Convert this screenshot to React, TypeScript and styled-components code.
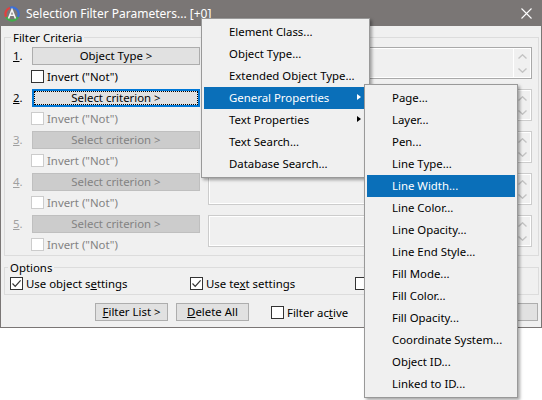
import React from 'react';
import styled, { createGlobalStyle, css } from 'styled-components';

const FONT = `"Segoe UI", "Noto Sans", "Open Sans", sans-serif`;
const SIZE = '11.4px';

const Global = createGlobalStyle`
  html, body { margin: 0; padding: 0; background: #ffffff; }
  body { font-family: ${FONT}; font-size: ${SIZE}; color: #000; }
  * { box-sizing: border-box; }
`;

const Screen = styled.div`
  position: relative;
  width: 542px;
  height: 400px;
  overflow: hidden;
`;

const Window = styled.div`
  width: 542px;
  border: 1px solid #7a7675;
  background: #f0f0f0;
`;

const TitleBar = styled.div`
  height: 25px;
  background: #7a7675;
  display: flex;
  align-items: center;
  padding-left: 3px;
  color: #fff;
`;

const TitleText = styled.span`
  margin-left: 6px;
  font-size: 12px;
  line-height: 16px;
  white-space: nowrap;
`;

const CloseGlyph = styled.svg`
  margin-left: auto;
  margin-right: 9px;
`;

const Client = styled.div`
  padding: 4px 2px 6px 3px;
`;

const Group = styled.fieldset<{ $pad: string }>`
  margin: 0;
  min-width: 0;
  border: 1px solid #dcdcdc;
  padding: ${p => p.$pad};
  & + & {
    margin-top: 4px;
  }
`;

const Legend = styled.legend`
  padding: 0 2px;
  margin-left: -2px;
  line-height: 15px;
  font-size: ${SIZE};
`;

const Rows = styled.div`
  display: flex;
  flex-direction: column;
  gap: 6px;
`;

const CriteriaRow = styled.div`
  display: grid;
  grid-template-columns: 19px 168px 1fr;
  grid-template-rows: 18px 13px;
  row-gap: 5px;
`;

const Num = styled.span<{ $disabled?: boolean }>`
  line-height: 18px;
  color: ${p => (p.$disabled ? '#a0a0a0' : '#000')};
`;

const U = styled.span`
  text-decoration: underline;
  text-underline-offset: 1px;
`;

const Button = styled.button<{ $disabled?: boolean; $focused?: boolean; $width?: number }>`
  font-family: ${FONT};
  font-size: ${SIZE};
  height: 18px;
  width: ${p => (p.$width ? `${p.$width}px` : 'auto')};
  padding: 0;
  margin: 0;
  line-height: 16px;
  background: #e1e1e1;
  border: 1px solid #adadad;
  color: #000;
  white-space: nowrap;
  ${p =>
    p.$disabled &&
    css`
      background: #cccccc;
      border-color: #bfbfbf;
      color: #838383;
    `}
  ${p =>
    p.$focused &&
    css`
      border-color: #0078d7;
      box-shadow: inset 0 0 0 1px #0078d7;
      outline: 1px dotted #000;
      outline-offset: -3px;
    `}
`;

const CheckRow = styled.label<{ $disabled?: boolean; $width?: number }>`
  display: flex;
  align-items: center;
  gap: 3px;
  height: 13px;
  line-height: 15px;
  white-space: nowrap;
  flex: none;
  width: ${p => (p.$width ? `${p.$width}px` : 'auto')};
  color: ${p => (p.$disabled ? '#838383' : '#000')};
`;

const InvertRow = styled(CheckRow)`
  grid-column: 2;
  grid-row: 2;
  margin-left: -1px;
`;

const Box = styled.span<{ $disabled?: boolean }>`
  width: 13px;
  height: 13px;
  flex: none;
  border: 1px solid ${p => (p.$disabled ? '#cccccc' : '#333333')};
  background: #fff;
  display: flex;
  align-items: center;
  justify-content: center;
`;

const ListBox = styled.div<{ $enabled?: boolean }>`
  grid-column: 3;
  grid-row: 1 / span 2;
  align-self: start;
  margin-left: 8px;
  height: 32px;
  border: 1px solid ${p => (p.$enabled ? '#a9a9a9' : '#cccccc')};
  box-shadow: inset 0 0 0 1px #ffffff;
  background: #f0f0f0;
  display: flex;
  justify-content: flex-end;
`;

const ScrollCol = styled.div`
  width: 18px;
  margin: 1px 0;
  border-left: 1px solid #ffffff;
  display: flex;
  flex-direction: column;
  align-items: center;
  padding-top: 5px;
  gap: 9px;
`;

const OptionsRow = styled.div`
  display: flex;
  align-items: center;
  height: 15px;
`;

const BottomBar = styled.div`
  display: flex;
  align-items: center;
  margin-top: 8px;
  padding-left: 91px;
  padding-right: 1px;
  gap: 8px;
`;

const FilterCheck = styled(CheckRow)`
  margin-left: 14px;
`;

const RightButton = styled(Button)`
  margin-left: auto;
`;

const Menu = styled.div<{ $left: number; $top: number; $width: number }>`
  position: absolute;
  left: ${p => p.$left}px;
  top: ${p => p.$top}px;
  width: ${p => p.$width}px;
  background: #f0f0f0;
  border: 1px solid #999999;
  padding: 2px;
  box-shadow: 2px 2px 3px rgba(0, 0, 0, 0.35);
`;

const Item = styled.div<{ $active?: boolean; $sub?: boolean }>`
  position: relative;
  height: 22px;
  line-height: 22px;
  padding-left: 25px;
  white-space: nowrap;
  color: ${p => (p.$active ? '#fff' : '#000')};
  background: ${p => (p.$active ? '#0a6fb9' : 'transparent')};
  ${p =>
    p.$sub &&
    css`
      &::after {
        content: '';
        position: absolute;
        right: 6px;
        top: 7px;
        border-style: solid;
        border-width: 3.5px 0 3.5px 4px;
        border-color: transparent transparent transparent ${p.$active ? '#fff' : '#000'};
      }
    `}
`;

const Logo = () => (
  <svg width="16" height="16" viewBox="0 0 16 16">
    <path d="M2.2 11 A6.6 6.6 0 0 1 6 1.7" stroke="#e0403f" strokeWidth="2.2" fill="none" />
    <path d="M6 1.7 A6.6 6.6 0 0 1 13.9 11" stroke="#3a6fd8" strokeWidth="2.2" fill="none" />
    <path d="M13.9 11 A6.6 6.6 0 0 1 2.2 11" stroke="#3fae4a" strokeWidth="2.2" fill="none" />
    <path d="M4.5 12.5 L8 3.6 L11.5 12.5 M6 9.2 H10" stroke="#f3f3f3" strokeWidth="1.6" fill="none" />
  </svg>
);

const Chevron = ({ up }: { up?: boolean }) => (
  <svg width="9" height="5" viewBox="0 0 9 5">
    <polyline
      points={up ? '0.5,4.5 4.5,0.8 8.5,4.5' : '0.5,0.5 4.5,4.2 8.5,0.5'}
      fill="none"
      stroke="#c3c3c3"
      strokeWidth="1.4"
    />
  </svg>
);

const Tick = () => (
  <svg width="11" height="11" viewBox="0 0 11 11">
    <polyline points="1.5,5.5 4.2,8.3 9.6,2.4" fill="none" stroke="#333" strokeWidth="1.2" />
  </svg>
);

const Check = ({ checked, disabled }: { checked?: boolean; disabled?: boolean }) => (
  <Box $disabled={disabled}>{checked && <Tick />}</Box>
);

const criteria = [
  { label: 'Object Type >', enabled: true },
  { label: 'Select criterion >', enabled: true, focused: true },
  { label: 'Select criterion >' },
  { label: 'Select criterion >' },
  { label: 'Select criterion >' },
];

const mainItems = [
  { t: 'Element Class...' },
  { t: 'Object Type...' },
  { t: 'Extended Object Type...' },
  { t: 'General Properties', sub: true, active: true },
  { t: 'Text Properties', sub: true },
  { t: 'Text Search...' },
  { t: 'Database Search...' },
];

const subItems = [
  'Page...',
  'Layer...',
  'Pen...',
  'Line Type...',
  'Line Width...',
  'Line Color...',
  'Line Opacity...',
  'Line End Style...',
  'Fill Mode...',
  'Fill Color...',
  'Fill Opacity...',
  'Coordinate System...',
  'Object ID...',
  'Linked to ID...',
];

export default function App() {
  return (
    <Screen>
      <Global />
      <Window>
        <TitleBar>
          <Logo />
          <TitleText>Selection Filter Parameters... [+0]</TitleText>
          <CloseGlyph width="11" height="11" viewBox="0 0 11 11">
            <path d="M0.5 0.5 L10.5 10.5 M10.5 0.5 L0.5 10.5" stroke="#fff" strokeWidth="1.1" />
          </CloseGlyph>
        </TitleBar>
        <Client>
          <Group $pad="2px 6px 4px 8px">
            <Legend>Filter Criteria</Legend>
            <Rows>
              {criteria.map((c, i) => (
                <CriteriaRow key={i}>
                  <Num $disabled={i > 1}>
                    <U>{i + 1}</U>.
                  </Num>
                  <Button $disabled={!c.enabled} $focused={c.focused}>
                    {c.label}
                  </Button>
                  <InvertRow $disabled={i > 0}>
                    <Check disabled={i > 0} />
                    Invert ("Not")
                  </InvertRow>
                  <ListBox $enabled={i === 0}>
                    <ScrollCol>
                      <Chevron up />
                      <Chevron />
                    </ScrollCol>
                  </ListBox>
                </CriteriaRow>
              ))}
            </Rows>
          </Group>
          <Group $pad="1px 4px 3px 5px">
            <Legend>Options</Legend>
            <OptionsRow>
              <CheckRow $width={180}>
                <Check checked />
                <span>
                  Use object s<U>e</U>ttings
                </span>
              </CheckRow>
              <CheckRow $width={165}>
                <Check checked />
                <span>
                  Use te<U>x</U>t settings
                </span>
              </CheckRow>
              <CheckRow>
                <Check />
              </CheckRow>
            </OptionsRow>
          </Group>
          <BottomBar>
            <Button $width={73}>
              <U>F</U>ilter List &gt;
            </Button>
            <Button $width={73}>
              <U>D</U>elete All
            </Button>
            <FilterCheck>
              <Check />
              <span>
                Filter ac<U>t</U>ive
              </span>
            </FilterCheck>
            <RightButton $width={73} aria-label="Close" />
          </BottomBar>
        </Client>
      </Window>

      <Menu $left={201} $top={18} $width={169}>
        {mainItems.map(m => (
          <Item key={m.t} $active={m.active} $sub={m.sub}>
            {m.t}
          </Item>
        ))}
      </Menu>
      <Menu $left={364} $top={84} $width={154}>
        {subItems.map(s => (
          <Item key={s} $active={s === 'Line Width...'}>
            {s}
          </Item>
        ))}
      </Menu>
    </Screen>
  );
}
